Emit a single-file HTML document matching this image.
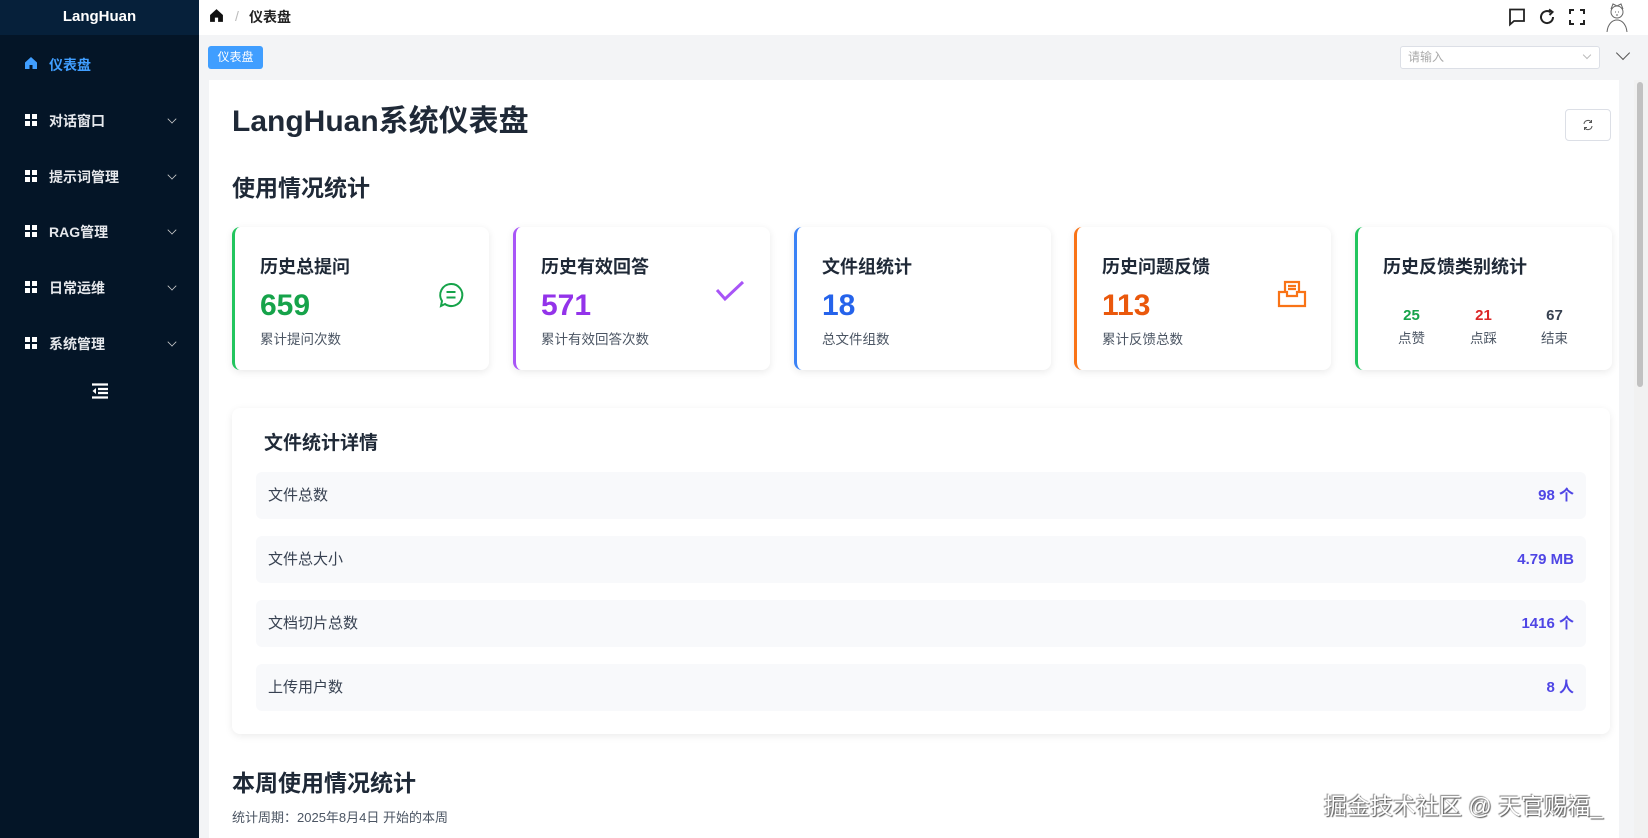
<!DOCTYPE html>
<html><head><meta charset="utf-8"><style>
*{box-sizing:border-box;margin:0;padding:0}
body{width:1648px;height:838px;overflow:hidden;font-family:"Liberation Sans","Noto Sans CJK SC",sans-serif;background:#f3f4f6;position:relative;color:#1f2937}
.side{position:absolute;left:0;top:0;width:199px;height:838px;background:#041527}
.logo{height:35px;line-height:33px;text-align:center;color:#fff;font-weight:bold;font-size:15px;background:#06203a}
.mi{position:absolute;left:0;width:199px;height:40px;color:#e5e7eb;font-size:14px;font-weight:bold}
.mi .ic{position:absolute;left:25px;top:14px;width:13px;height:13px}
.mi .ic i{position:absolute;width:5px;height:5px;background:#fff}
.mi .tx{position:absolute;left:49px;top:11px}
.mi .ch{position:absolute;left:168px;top:15px;width:8px;height:8px;border-right:1.3px solid #ccc;border-bottom:1.3px solid #ccc;transform:rotate(45deg) scale(.8)}
.hdr{position:absolute;left:199px;top:0;right:0;height:35px;background:#fff}
.tags{position:absolute;left:199px;top:35px;right:0;height:45px;background:#f3f4f6}
.main{position:absolute;left:209px;top:80px;width:1410px;height:758px;background:#fff}
.card{position:absolute;top:227px;width:257px;height:143px;background:#fff;border-radius:8px;box-shadow:0 2px 8px rgba(0,0,0,.09);border-left:3px solid}
.card .t{position:absolute;left:25px;top:26px;font-size:18px;font-weight:bold;color:#1f2937}
.card .n{position:absolute;left:25px;top:62px;font-size:30px;font-weight:bold}
.card .s{position:absolute;left:25px;top:101px;font-size:13.5px;color:#4b5563}
.row{position:absolute;left:256px;width:1330px;height:47px;background:#f8f9fb;border-radius:6px;font-size:15px;line-height:21px}
.row .l{position:absolute;left:12px;top:13px;color:#374151}
.row .r{position:absolute;right:12px;top:13px;color:#4f46e5;font-weight:bold;height:21px}
</style></head><body>
<div class="side">
<div class="logo">LangHuan</div>
<div class="mi" style="top:44px;color:#409eff"><svg style="position:absolute;left:24px;top:12px" width="14" height="14" viewBox="0 0 14 14"><path d="M7 1L1 6.5V13H5.5V9H8.5V13H13V6.5Z" fill="#409eff"/></svg><span class="tx">仪表盘</span></div>
<div class="mi" style="top:100px"><span class="ic"><i style="left:0;top:0"></i><i style="left:7px;top:0"></i><i style="left:0;top:7px"></i><i style="left:7px;top:7px"></i></span><span class="tx">对话窗口</span><span class="ch"></span></div>
<div class="mi" style="top:156px"><span class="ic"><i style="left:0;top:0"></i><i style="left:7px;top:0"></i><i style="left:0;top:7px"></i><i style="left:7px;top:7px"></i></span><span class="tx">提示词管理</span><span class="ch"></span></div>
<div class="mi" style="top:211px"><span class="ic"><i style="left:0;top:0"></i><i style="left:7px;top:0"></i><i style="left:0;top:7px"></i><i style="left:7px;top:7px"></i></span><span class="tx">RAG管理</span><span class="ch"></span></div>
<div class="mi" style="top:267px"><span class="ic"><i style="left:0;top:0"></i><i style="left:7px;top:0"></i><i style="left:0;top:7px"></i><i style="left:7px;top:7px"></i></span><span class="tx">日常运维</span><span class="ch"></span></div>
<div class="mi" style="top:323px"><span class="ic"><i style="left:0;top:0"></i><i style="left:7px;top:0"></i><i style="left:0;top:7px"></i><i style="left:7px;top:7px"></i></span><span class="tx">系统管理</span><span class="ch"></span></div>
<svg style="position:absolute;left:91px;top:383px" width="18" height="16" viewBox="0 0 18 16"><path d="M1 1.5H17M7 6H17M7 10H17M1 14.5H17" stroke="#fff" stroke-width="2.2"/><path d="M5 5L1.5 8L5 11Z" fill="#fff"/></svg>
</div>
<div class="hdr">
<svg style="position:absolute;left:10px;top:8px" width="15" height="15" viewBox="0 0 14 14"><path d="M7 1L1 6.5V13H5.5V9H8.5V13H13V6.5Z" fill="#111"/></svg>
<span style="position:absolute;left:36px;top:8px;color:#bbb;font-size:14px">/</span>
<span style="position:absolute;left:50px;top:7px;font-size:14px;font-weight:bold;color:#222">仪表盘</span>
<svg style="position:absolute;left:1308px;top:7px" width="20" height="20" viewBox="0 0 20 20" fill="none" stroke="#222" stroke-width="1.8"><path d="M3 2.5H17V14H7L3 17.5Z"/></svg>
<svg style="position:absolute;left:1338px;top:7px" width="20" height="20" viewBox="0 0 20 20" fill="none" stroke="#222" stroke-width="2"><path d="M16 10A6 6 0 1 1 13.5 5.2"/><path d="M12 2.5L15.5 5L12.5 8" /></svg>
<svg style="position:absolute;left:1368px;top:7px" width="20" height="20" viewBox="0 0 20 20" fill="none" stroke="#222" stroke-width="2"><path d="M3 7V3H7M13 3H17V7M17 13V17H13M7 17H3V13"/></svg>
<svg style="position:absolute;left:1404px;top:2px" width="28" height="30" viewBox="0 0 28 30" fill="none" stroke="#666" stroke-width="1"><circle cx="14" cy="10" r="6"/><path d="M8 7L10 2L14 4L18 2L20 7M4 30C5 21 10 18 14 18S23 21 24 30M12 10H13M15 10H16M14 12V14"/></svg>
</div>
<div class="tags">
<div style="position:absolute;left:9px;top:11px;width:55px;height:23px;background:#409eff;color:#fff;border-radius:3px;font-size:12px;text-align:center;line-height:23px">仪表盘</div>
<div style="position:absolute;left:1201px;top:11px;width:200px;height:23px;background:#fff;border:1px solid #dcdfe6;border-radius:3px;font-size:12px;color:#aaa;line-height:21px;padding-left:7px">请输入<span style="position:absolute;right:9px;top:5px;width:6px;height:6px;border-right:1px solid #bbb;border-bottom:1px solid #bbb;transform:rotate(45deg)"></span></div>
<span style="position:absolute;left:1419px;top:13px;width:10px;height:10px;border-right:1.3px solid #555;border-bottom:1.3px solid #555;transform:rotate(45deg)"></span>
</div>
<div class="main"></div>
<div style="position:absolute;left:1634px;top:80px;width:14px;height:758px;background:#f1f1f1"></div>
<div style="position:absolute;left:1637px;top:82px;width:6px;height:305px;background:#c1c1c1;border-radius:4px"></div>
<div style="position:absolute;left:232px;top:104px;font-size:30px;font-weight:bold;color:#1f2937;line-height:36px">LangHuan系统仪表盘</div>
<div style="position:absolute;left:1565px;top:109px;width:46px;height:32px;border:1px solid #dcdfe6;border-radius:4px"><svg style="position:absolute;left:16px;top:9px" width="12" height="12" viewBox="0 0 12 12" fill="none" stroke="#555" stroke-width="1"><path d="M2 5A4 4 0 0 1 9.5 3.5M10 7A4 4 0 0 1 2.5 8.5M9.5 1V3.5H7M2.5 11V8.5H5"/></svg></div>
<div style="position:absolute;left:232px;top:174px;font-size:23px;font-weight:bold;color:#1f2937;line-height:28px">使用情况统计</div>

<div class="card" style="left:232px;border-color:#22c55e"><div class="t">历史总提问</div><div class="n" style="color:#16a34a">659</div><div class="s">累计提问次数</div>
<svg style="position:absolute;left:202px;top:54px" width="28" height="28" viewBox="0 0 28 28" fill="none" stroke="#16a34a" stroke-width="2"><path d="M14 3A11 11 0 1 1 8 23L4 25L5 20A11 11 0 0 1 14 3Z"/><path d="M9.5 11H18.5M9.5 16.5H18.5"/></svg></div>
<div class="card" style="left:513px;border-color:#a855f7"><div class="t">历史有效回答</div><div class="n" style="color:#9333ea">571</div><div class="s">累计有效回答次数</div>
<svg style="position:absolute;left:198px;top:52px" width="32" height="26" viewBox="0 0 32 26" fill="none" stroke="#a855f7" stroke-width="3"><path d="M3 11L11 20L29 3"/></svg></div>
<div class="card" style="left:794px;border-color:#3b82f6"><div class="t">文件组统计</div><div class="n" style="color:#2563eb">18</div><div class="s">总文件组数</div></div>
<div class="card" style="left:1074px;border-color:#f97316"><div class="t">历史问题反馈</div><div class="n" style="color:#ea580c">113</div><div class="s">累计反馈总数</div>
<svg style="position:absolute;left:200px;top:53px" width="30" height="28" viewBox="0 0 30 28" fill="none" stroke="#f97316" stroke-width="2.2"><path d="M8 12V2H22V12M2 12H10V16H20V12H28V26H2Z M11 6H19M11 9H19"/></svg></div>
<div class="card" style="left:1355px;border-color:#22c55e"><div class="t">历史反馈类别统计</div>
<div style="position:absolute;left:40px;top:80px;text-align:center;font-size:15px;font-weight:bold;color:#16a34a">25<div style="font-size:13.5px;font-weight:normal;color:#4b5563;margin-top:3px">点赞</div></div>
<div style="position:absolute;left:112px;top:80px;text-align:center;font-size:15px;font-weight:bold;color:#dc2626">21<div style="font-size:13.5px;font-weight:normal;color:#4b5563;margin-top:3px">点踩</div></div>
<div style="position:absolute;left:183px;top:80px;text-align:center;font-size:15px;font-weight:bold;color:#374151">67<div style="font-size:13.5px;font-weight:normal;color:#4b5563;margin-top:3px">结束</div></div>
</div>

<div style="position:absolute;left:232px;top:408px;width:1378px;height:326px;background:#fff;border-radius:8px;box-shadow:0 2px 8px rgba(0,0,0,.08)"></div>
<div style="position:absolute;left:264px;top:428px;font-size:19px;font-weight:bold;color:#1f2937">文件统计详情</div>
<div class="row" style="top:472px"><span class="l">文件总数</span><span class="r">98 个</span></div>
<div class="row" style="top:536px"><span class="l">文件总大小</span><span class="r">4.79 MB</span></div>
<div class="row" style="top:600px"><span class="l">文档切片总数</span><span class="r">1416 个</span></div>
<div class="row" style="top:664px"><span class="l">上传用户数</span><span class="r">8 人</span></div>
<div style="position:absolute;left:232px;top:769px;font-size:23px;font-weight:bold;color:#1f2937;line-height:28px">本周使用情况统计</div>
<div style="position:absolute;left:232px;top:807px;font-size:13px;color:#4b5563">统计周期：2025年8月4日 开始的本周</div>
<div style="position:absolute;left:1324px;top:787px;font-size:23px;color:#fff;text-shadow:1px 1px 1px #555,-1px -1px 1px #888">掘金技术社区 @ 天官赐福_</div>
</body></html>
